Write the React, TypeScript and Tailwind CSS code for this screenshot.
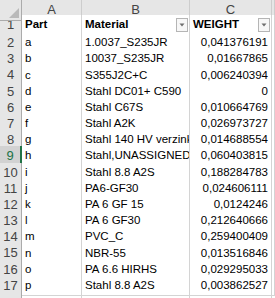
import React from "react";

type Row = { part: string; material: string; weight: string };

const rows: Row[] = [
  { part: "a", material: "1.0037_S235JR", weight: "0,041376191" },
  { part: "b", material: "10037_S235JR", weight: "0,01667865" },
  { part: "c", material: "S355J2C+C", weight: "0,006240394" },
  { part: "d", material: "Stahl DC01+ C590", weight: "0" },
  { part: "e", material: "Stahl C67S", weight: "0,010664769" },
  { part: "f", material: "Stahl A2K", weight: "0,026973727" },
  { part: "g", material: "Stahl 140 HV verzinkt", weight: "0,014688554" },
  { part: "h", material: "Stahl,UNASSIGNED", weight: "0,060403815" },
  { part: "i", material: "Stahl 8.8 A2S", weight: "0,188284783" },
  { part: "j", material: "PA6-GF30", weight: "0,024606111" },
  { part: "k", material: "PA 6 GF 15", weight: "0,0124246" },
  { part: "l", material: "PA 6 GF30", weight: "0,212640666" },
  { part: "m", material: "PVC_C", weight: "0,259400409" },
  { part: "n", material: "NBR-55", weight: "0,013516846" },
  { part: "o", material: "PA 6.6 HIRHS", weight: "0,029295033" },
  { part: "p", material: "Stahl 8.8 A2S", weight: "0,003862527" },
];

const cols = "grid grid-cols-[22px_60px_108px_82px_1fr]";
const cell = "flex items-center overflow-hidden whitespace-nowrap border-r border-b border-[#d4d4d4] bg-white";
const colHead =
  "flex items-center justify-center border-r border-b border-r-[#cdcdcd] border-b-[#ababab] bg-[#e6e6e6] text-[13px] text-[#444]";

function FilterButton() {
  return (
    <span className="ml-auto mr-[1px] flex h-[14px] w-[12px] shrink-0 items-center justify-center border border-[#b5b5b5] bg-[#f7f7f7]">
      <svg width="6" height="4" viewBox="0 0 6 4" aria-hidden="true">
        <path d="M0.5 0.5h5L3 3.5z" fill="#6e6e6e" />
      </svg>
    </span>
  );
}

function RowHead({ n, selected }: { n: number; selected?: boolean }) {
  return (
    <div
      className={`flex items-center justify-center border-b border-r text-[13px] ${
        selected
          ? "border-r-2 border-r-[#217346] border-b-[#c4c4c4] bg-[#d2d2d2] text-[#217346]"
          : "border-r-[#ababab] border-b-[#d0d0d0] bg-[#e6e6e6] text-[#444]"
      }`}
    >
      {n}
    </div>
  );
}

export default function App() {
  return (
    <div className="h-[298px] w-[275px] overflow-hidden bg-white text-[11.5px] text-black [font-family:'Liberation_Sans',Arial,sans-serif]">
      <div className={`${cols} h-[15px]`}>
        <div className="relative border-r border-b border-r-[#ababab] border-b-[#ababab] bg-[#e6e6e6]">
          <svg className="absolute bottom-[2px] right-[2px]" width="10" height="10" viewBox="0 0 10 10" aria-hidden="true">
            <path d="M10 0V10H0z" fill="#b9b9b9" />
          </svg>
        </div>
        <div className={colHead}>A</div>
        <div className={colHead}>B</div>
        <div className={colHead}>C</div>
        <div className={colHead} />
      </div>

      <div className={`${cols} h-[18px]`}>
        <RowHead n={1} />
        <div className={`${cell} pl-[3px] font-bold`}>Part</div>
        <div className={`${cell} pl-[3px] font-bold`}>
          <span>Material</span>
          <FilterButton />
        </div>
        <div className={`${cell} pl-[3px] font-bold`}>
          <span>WEIGHT</span>
          <FilterButton />
        </div>
        <div className={cell} />
      </div>

      {rows.map((r, i) => (
        <div key={r.part} className={`${cols} h-[16.2px]`}>
          <RowHead n={i + 2} selected={i + 2 === 9} />
          <div className={`${cell} pl-[3px]`}>{r.part}</div>
          <div className={`${cell} pl-[3px]`}>{r.material}</div>
          <div className={`${cell} justify-end pr-[3px]`}>{r.weight}</div>
          <div className={cell} />
        </div>
      ))}

      <div className={`${cols} h-[20px]`}>
        <div className="border-r border-r-[#ababab] bg-[#e6e6e6]" />
        <div className="border-r border-[#d4d4d4]" />
        <div className="border-r border-[#d4d4d4]" />
        <div className="border-r border-[#d4d4d4]" />
        <div />
      </div>
    </div>
  );
}
